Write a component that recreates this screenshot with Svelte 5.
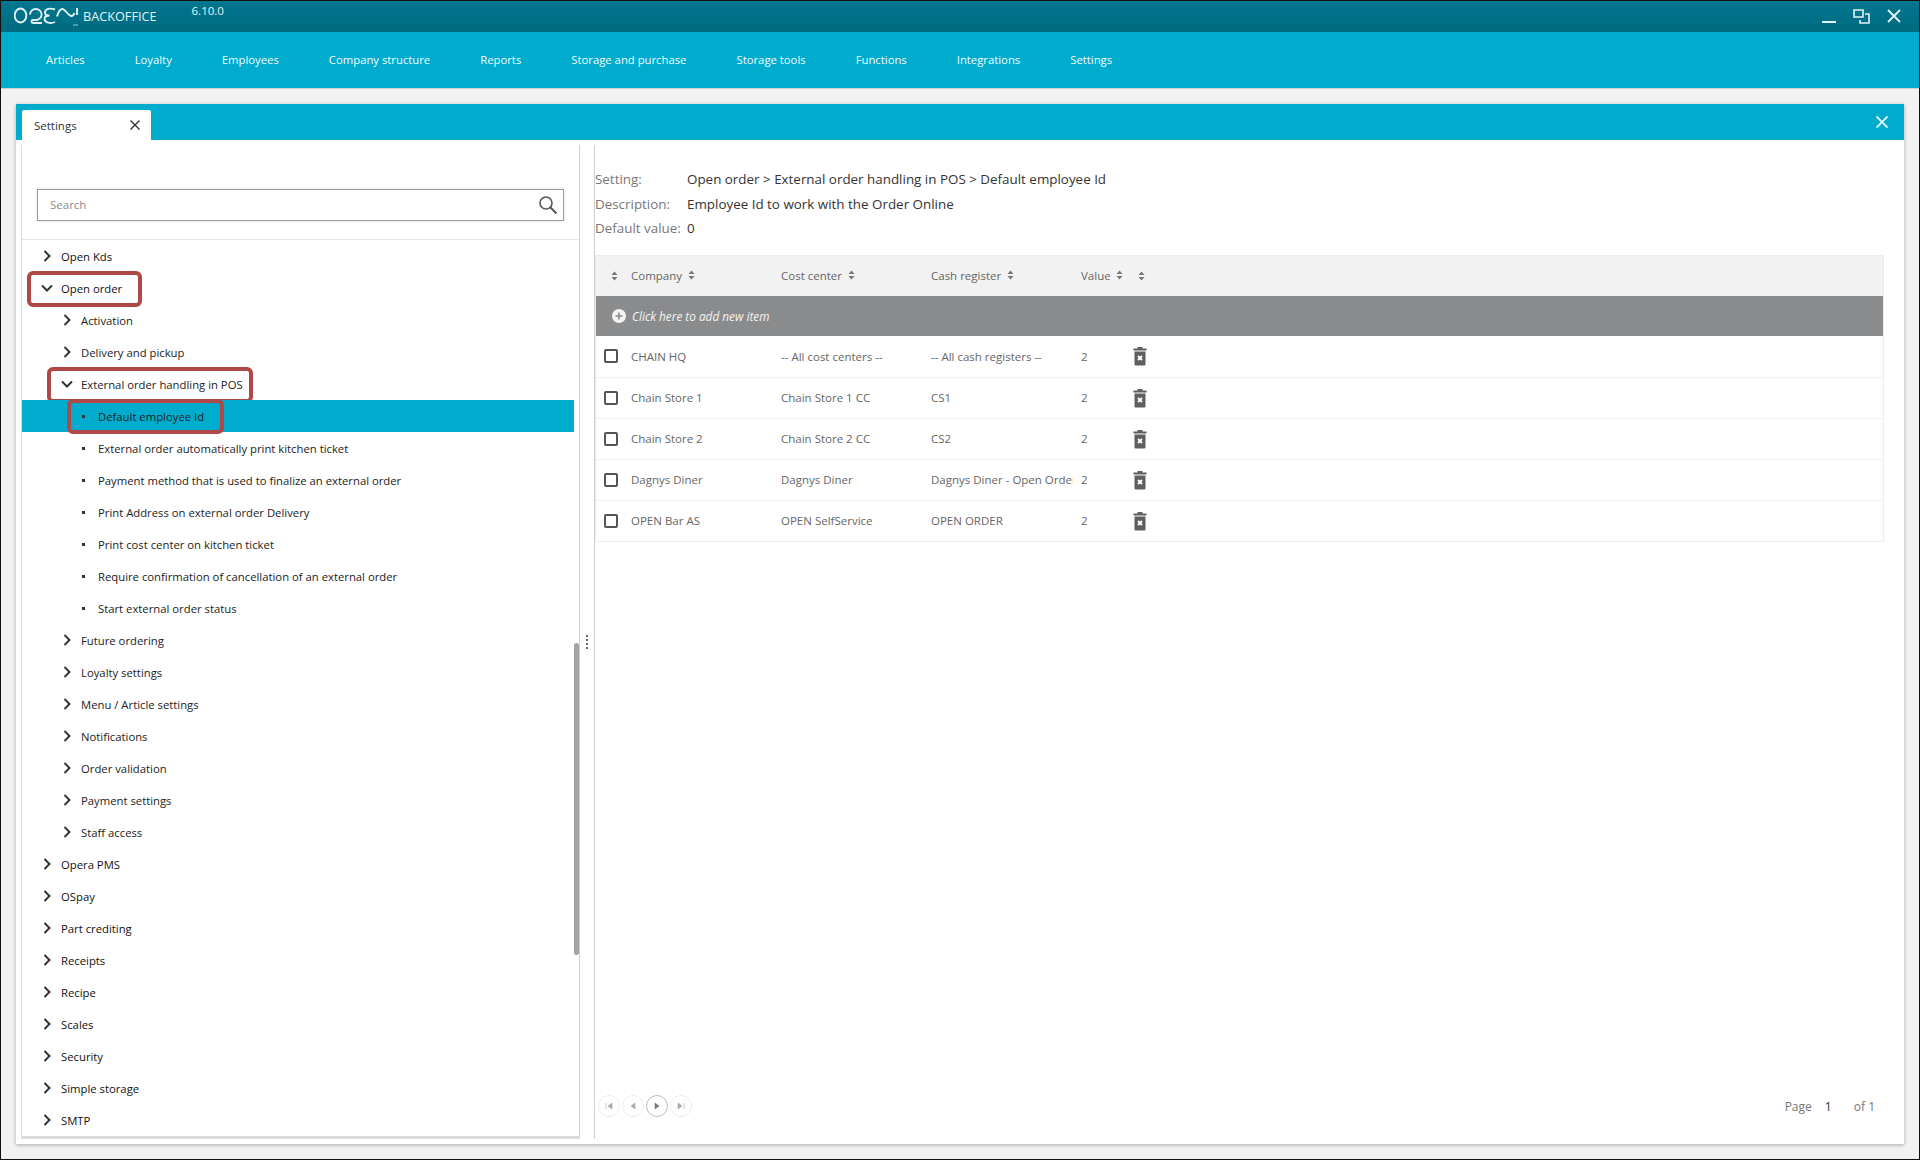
<script lang="ts">
  const navItems = ['Articles', 'Loyalty', 'Employees', 'Company structure', 'Reports', 'Storage and purchase', 'Storage tools', 'Functions', 'Integrations', 'Settings'];

  // level 0/1 = branch with a chevron, level 2 = leaf with a bullet
  const tree = [
    { label: 'Open Kds', level: 0 },
    { label: 'Open order', level: 0, open: true, mark: 'm0' },
    { label: 'Activation', level: 1 },
    { label: 'Delivery and pickup', level: 1 },
    { label: 'External order handling in POS', level: 1, open: true, mark: 'm1' },
    { label: 'Default employee Id', level: 2, active: true, mark: 'm2' },
    { label: 'External order automatically print kitchen ticket', level: 2 },
    { label: 'Payment method that is used to finalize an external order', level: 2 },
    { label: 'Print Address on external order Delivery', level: 2 },
    { label: 'Print cost center on kitchen ticket', level: 2 },
    { label: 'Require confirmation of cancellation of an external order', level: 2 },
    { label: 'Start external order status', level: 2 },
    { label: 'Future ordering', level: 1 },
    { label: 'Loyalty settings', level: 1 },
    { label: 'Menu / Article settings', level: 1 },
    { label: 'Notifications', level: 1 },
    { label: 'Order validation', level: 1 },
    { label: 'Payment settings', level: 1 },
    { label: 'Staff access', level: 1 },
    { label: 'Opera PMS', level: 0 },
    { label: 'OSpay', level: 0 },
    { label: 'Part crediting', level: 0 },
    { label: 'Receipts', level: 0 },
    { label: 'Recipe', level: 0 },
    { label: 'Scales', level: 0 },
    { label: 'Security', level: 0 },
    { label: 'Simple storage', level: 0 },
    { label: 'SMTP', level: 0 }
  ];

  const rows = [
    ['CHAIN HQ', '-- All cost centers --', '-- All cash registers --'],
    ['Chain Store 1', 'Chain Store 1 CC', 'CS1'],
    ['Chain Store 2', 'Chain Store 2 CC', 'CS2'],
    ['Dagnys Diner', 'Dagnys Diner', 'Dagnys Diner - Open Order'],
    ['OPEN Bar AS', 'OPEN SelfService', 'OPEN ORDER']
  ];
</script>

{#snippet sort()}
  <svg class="sort" width="7" height="10" viewBox="0 0 7 10"><path d="M3.5 0.5 6.5 4H0.5ZM3.5 9.5 0.5 6H6.5Z" /></svg>
{/snippet}

<div class="window">
  <header class="titlebar">
    <svg class="logo" width="66" height="24" viewBox="0 0 66 24">
      <g fill="none" stroke="#dff3f6" stroke-width="1.9">
        <ellipse cx="6.5" cy="9.5" rx="5.8" ry="7" />
        <path d="M16 8.500a5.800 5.500 0 1 1 5.800 5.500H19a1.500 1.500 0 0 0 0 3H28" />
        <path d="M41 3.500C36 1.500 31 3 31 6.500c0 2 2 3 4.500 3-3 0-5 1-5 3.500 0 3.500 6 5 10.500 3" />
        <path d="M43 10.500c1-3 2-7 5-7.500 3-.5 6 6.500 9 7 2 .3 3-1.500 3.500-3" />
        <path d="M63 2V9" />
      </g>
      <path d="M59 19H64" stroke="#dff3f6" stroke-width="1" opacity="0.7" />
    </svg>
    <span class="brand">BACKOFFICE</span>
    <span class="version">6.10.0</span>
    <div class="winctl">
      <svg width="14" height="14" viewBox="0 0 14 14"><path d="M0 13H14" stroke="#e3f5f8" stroke-width="2" /></svg>
      <svg width="17" height="15" viewBox="0 0 17 15" fill="none" stroke="#e3f5f8" stroke-width="1.6"><path d="M1 1h9v7H1z" /><path d="M12 5h4v9H7v-3" /></svg>
      <svg width="14" height="14" viewBox="0 0 14 14"><path d="M1 1 13 13M13 1 1 13" stroke="#e3f5f8" stroke-width="1.8" /></svg>
    </div>
  </header>

  <nav class="menu">
    {#each navItems as item}
      <span class="menu-item">{item}</span>
    {/each}
  </nav>

  <main class="content">
    <section class="panel">
      <div class="tabstrip">
        <div class="tab">
          <span>Settings</span>
          <svg width="10" height="10" viewBox="0 0 10 10"><path d="M0.5 0.5 9.5 9.5M9.5 0.5 0.5 9.5" stroke="#333" stroke-width="1.4" /></svg>
        </div>
        <svg class="strip-close" width="12" height="12" viewBox="0 0 12 12"><path d="M0.5 0.5 11.5 11.5M11.5 0.5 0.5 11.5" stroke="#e8f8fb" stroke-width="1.8" /></svg>
      </div>

      <div class="split">
        <aside class="left">
          <div class="search-wrap">
            <div class="search">
              <span>Search</span>
              <svg width="20" height="20" viewBox="0 0 20 20" fill="none" stroke="#555" stroke-width="1.6"><circle cx="8" cy="8" r="6" /><path d="M12.5 12.5 18.5 18.5" stroke-width="2" /></svg>
            </div>
          </div>
          <div class="tree">
            {#each tree as node}
              <div class="node lvl{node.level}" class:active={node.active}>
                {#if node.level === 2}
                  <i class="bullet"></i>
                {:else if node.open}
                  <svg class="chev" width="12" height="12" viewBox="0 0 12 12"><path d="M1 3.5 6 8.5 11 3.5" /></svg>
                {:else}
                  <svg class="chev" width="12" height="12" viewBox="0 0 12 12"><path d="M3.5 1 8.5 6 3.5 11" /></svg>
                {/if}
                <span>{node.label}</span>
                {#if node.mark}<b class="mark {node.mark}"></b>{/if}
              </div>
            {/each}
            <div class="thumb"></div>
          </div>
        </aside>

        <div class="splitter"><i></i><i></i><i></i><i></i></div>

        <div class="right">
          <dl class="info">
            <dt>Setting:</dt><dd>Open order &gt; External order handling in POS &gt; Default employee Id</dd>
            <dt>Description:</dt><dd>Employee Id to work with the Order Online</dd>
            <dt>Default value:</dt><dd>0</dd>
          </dl>

          <div class="table">
            <div class="thead">
              <span class="c0">{@render sort()}</span>
              <span class="c1">Company {@render sort()}</span>
              <span class="c2">Cost center {@render sort()}</span>
              <span class="c3">Cash register {@render sort()}</span>
              <span class="c4">Value {@render sort()}</span>
              <span class="c5">{@render sort()}</span>
            </div>
            <div class="addrow">
              <svg width="14" height="14" viewBox="0 0 14 14"><circle cx="7" cy="7" r="7" fill="#f4f4f4" /><path d="M7 3.5v7M3.5 7h7" stroke="#8a8b8c" stroke-width="1.6" /></svg>
              <span>Click here to add new item</span>
            </div>
            {#each rows as row}
              <div class="trow">
                <span class="c0"><i class="check"></i></span>
                <span class="c1">{row[0]}</span>
                <span class="c2">{row[1]}</span>
                <span class="c3">{row[2]}</span>
                <span class="c4">2</span>
                <span class="c5">
                  <svg width="14" height="20" viewBox="0 0 14 20"><path fill="#5f5f5f" d="M0.5 2.5H4.5V1H9.5V2.5H13.5V4.5H0.5ZM1.5 5.5H12.500V18.500A1 1 0 0 1 11.5 19.5H2.5A1 1 0 0 1 1.5 18.5Z" /><path d="M5 10 9 14M9 10 5 14" stroke="#fff" stroke-width="1.8" /></svg>
                </span>
              </div>
            {/each}
          </div>

          <footer class="pager">
            <div class="pager-btns">
              <span class="pbtn"><svg width="8" height="8" viewBox="0 0 8 8"><path d="M1 1V7M7 1 3 4 7 7Z" /></svg></span>
              <span class="pbtn"><svg width="8" height="8" viewBox="0 0 8 8"><path d="M6 1 2 4 6 7Z" /></svg></span>
              <span class="pbtn current"><svg width="8" height="8" viewBox="0 0 8 8"><path d="M2 1 6 4 2 7Z" /></svg></span>
              <span class="pbtn"><svg width="8" height="8" viewBox="0 0 8 8"><path d="M7 1V7M1 1 5 4 1 7Z" /></svg></span>
            </div>
            <div class="pageinfo"><span>Page</span><span class="num">1</span><span>of 1</span></div>
          </footer>
        </div>
      </div>
    </section>
  </main>
</div>

<style>
  :global(body) {
    margin: 0;
    background: #000;
    font-family: 'Open Sans', 'Liberation Sans', sans-serif;
  }

  .window {
    box-sizing: border-box;
    width: 1920px;
    height: 1160px;
    border: 1px solid #111;
    display: flex;
    flex-direction: column;
    background: #f2f2f2;
    overflow: hidden;
  }

  .titlebar {
    height: 31px;
    flex: none;
    display: flex;
    align-items: flex-start;
    background: linear-gradient(#00778f, #006a80);
    color: #e3f5f8;
    padding-left: 13px;
    position: relative;
  }

  .logo {
    margin-top: 5px;
  }

  .brand {
    font-size: 12.7px;
    margin-left: 3px;
    margin-top: 6px;
  }

  .version {
    font-size: 11.5px;
    margin-left: 35px;
    margin-top: 2px;
  }

  .winctl {
    margin-left: auto;
    display: flex;
    gap: 17px;
    padding: 8px 18px 0 0;
  }

  .menu {
    box-sizing: border-box;
    height: 57px;
    flex: none;
    display: flex;
    align-items: center;
    padding: 0 0 2px 20px;
    background: #00acce;
    border-bottom: 1px solid #c9d3d5;
  }

  .menu-item {
    padding: 0 25px;
    font-size: 11.3px;
    color: #f0fbfd;
    white-space: nowrap;
  }

  .content {
    flex: 1;
    min-height: 0;
    padding: 15px;
    display: flex;
  }

  .panel {
    flex: 1;
    display: flex;
    flex-direction: column;
    background: #fff;
    box-shadow: 0 1px 4px rgba(0, 0, 0, 0.3);
  }

  .tabstrip {
    height: 36px;
    flex: none;
    background: #00acce;
    display: flex;
    align-items: flex-end;
    justify-content: space-between;
    padding: 0 16px 0 6px;
  }

  .tab {
    box-sizing: border-box;
    width: 129px;
    height: 30px;
    background: #fff;
    border-radius: 2px 2px 0 0;
    display: flex;
    align-items: center;
    justify-content: space-between;
    padding: 0 11px 0 12px;
    font-size: 11.5px;
    color: #333;
  }

  .strip-close {
    margin-bottom: 12px;
  }

  .split {
    flex: 1;
    min-height: 0;
    display: flex;
    padding: 5px 0 5px 5px;
  }

  .left {
    box-sizing: border-box;
    width: 559px;
    flex: none;
    display: flex;
    flex-direction: column;
    border-left: 1px solid #dcdcdc;
    border-bottom: 3px solid #dcdcdc;
    border-right: 1px solid #cfcfcf;
  }

  .search-wrap {
    box-sizing: border-box;
    height: 95px;
    flex: none;
    padding: 44px 15px 0 15px;
    border-bottom: 1px solid #e4e4e4;
  }

  .search {
    box-sizing: border-box;
    height: 32px;
    border: 1px solid #9b9b9b;
    box-shadow: 0 0 3px rgba(0, 0, 0, 0.12);
    display: flex;
    align-items: center;
    justify-content: space-between;
    padding: 0 5px 1px 12px;
    font-size: 11.5px;
    color: #8c8c8c;
  }

  .tree {
    flex: 1;
    min-height: 0;
    position: relative;
    overflow: hidden;
  }

  .node {
    height: 32px;
    margin-right: 5px;
    display: flex;
    align-items: center;
    position: relative;
    font-size: 11.3px;
    color: #222;
    white-space: nowrap;
  }

  .lvl0 {
    padding-left: 19px;
    font-weight: 500;
    color: #111;
  }

  .lvl1 {
    padding-left: 39px;
  }

  .lvl2 {
    padding-left: 60px;
  }

  .active {
    background: #00acce;
  }

  .chev {
    flex: none;
    margin-right: 8px;
    fill: none;
    stroke: #333;
    stroke-width: 2;
  }

  .bullet {
    width: 3px;
    height: 3px;
    margin-right: 13px;
    background: #333;
    flex: none;
  }

  .mark {
    position: absolute;
    box-sizing: border-box;
    border: 4px solid #b04848;
    border-radius: 6px;
    pointer-events: none;
  }

  .m0 {
    left: 5px;
    top: -1px;
    width: 115px;
    height: 36px;
  }

  .m1 {
    left: 25px;
    top: -1px;
    width: 206px;
    height: 36px;
  }

  .m2 {
    left: 45px;
    top: -1px;
    width: 157px;
    height: 35px;
  }

  .thumb {
    position: absolute;
    right: 0;
    top: 403px;
    width: 5px;
    height: 312px;
    border-radius: 3px;
    background: #a3a3a3;
  }

  .splitter {
    box-sizing: border-box;
    width: 15px;
    flex: none;
    border-right: 1px solid #cfcfcf;
    display: flex;
    flex-direction: column;
    align-items: center;
    gap: 2px;
    padding-top: 490px;
  }

  .splitter i {
    width: 2px;
    height: 2px;
    background: #666;
  }

  .right {
    flex: 1;
    min-width: 0;
    display: flex;
    flex-direction: column;
    padding: 0 20px 0 0;
  }

  .info {
    margin: 0;
    padding: 22px 0 0 0;
    display: grid;
    grid-template-columns: 92px 1fr;
    grid-auto-rows: 24.5px;
    align-items: center;
    font-size: 13.4px;
  }

  .info dt {
    color: #777;
  }

  .info dd {
    margin: 0;
    color: #333;
  }

  .table {
    margin-top: 14px;
    border: 1px solid #ececec;
    font-size: 11.5px;
  }

  .thead,
  .trow,
  .addrow {
    display: flex;
    align-items: center;
  }

  .thead {
    height: 40px;
    background: #f2f2f2;
    color: #666;
  }

  .addrow {
    height: 40px;
    background: #8a8b8c;
    color: #f4f4f4;
    font-style: italic;
    font-size: 11.8px;
    padding-left: 16px;
    gap: 6px;
  }

  .trow {
    height: 41px;
    box-sizing: border-box;
    border-top: 1px solid #efefef;
    color: #666;
  }

  .addrow + .trow {
    border-top: 0;
  }

  .c0 {
    width: 35px;
    flex: none;
    padding-left: 8px;
    box-sizing: border-box;
    display: flex;
    align-items: center;
  }

  .thead .c0 {
    padding-left: 15px;
  }

  .c1,
  .c2,
  .c3 {
    flex: none;
    box-sizing: border-box;
    white-space: nowrap;
    overflow: hidden;
  }

  .c1 {
    width: 150px;
  }

  .c2 {
    width: 150px;
  }

  .c3 {
    width: 142px;
    margin-right: 8px;
  }

  .c4 {
    width: 48px;
    flex: none;
    white-space: nowrap;
  }

  .thead .c4 .sort {
    margin-left: 2px;
  }

  .c5 {
    flex: none;
    display: flex;
  }

  .thead .c5 {
    margin-left: 9px;
  }

  .trow .c5 {
    margin-left: 4px;
  }

  .sort {
    fill: #777;
    margin-left: 3px;
  }

  .c0 .sort,
  .c5 .sort {
    margin-left: 0;
  }

  .check {
    display: block;
    box-sizing: border-box;
    width: 14px;
    height: 14px;
    border: 2px solid #555;
    border-radius: 2px;
  }

  .pager {
    margin-top: auto;
    height: 39px;
    flex: none;
    display: flex;
    align-items: flex-start;
    justify-content: space-between;
    padding-right: 9px;
    margin-bottom: 5px;
  }

  .pager-btns {
    display: flex;
    gap: 2px;
    padding-left: 3px;
  }

  .pbtn {
    box-sizing: border-box;
    width: 22px;
    height: 22px;
    border: 1px solid #eee;
    border-radius: 50%;
    display: flex;
    align-items: center;
    justify-content: center;
  }

  .pbtn path {
    fill: #aaa;
    stroke: #aaa;
    stroke-width: 0.6;
  }

  .pbtn.current {
    border-color: #bbb;
  }

  .pbtn.current path {
    fill: #777;
    stroke: #777;
  }

  .pageinfo {
    display: flex;
    font-size: 12px;
    color: #777;
    padding-top: 3px;
  }

  .num {
    color: #333;
    width: 42px;
    padding-left: 13px;
    box-sizing: border-box;
  }
</style>
